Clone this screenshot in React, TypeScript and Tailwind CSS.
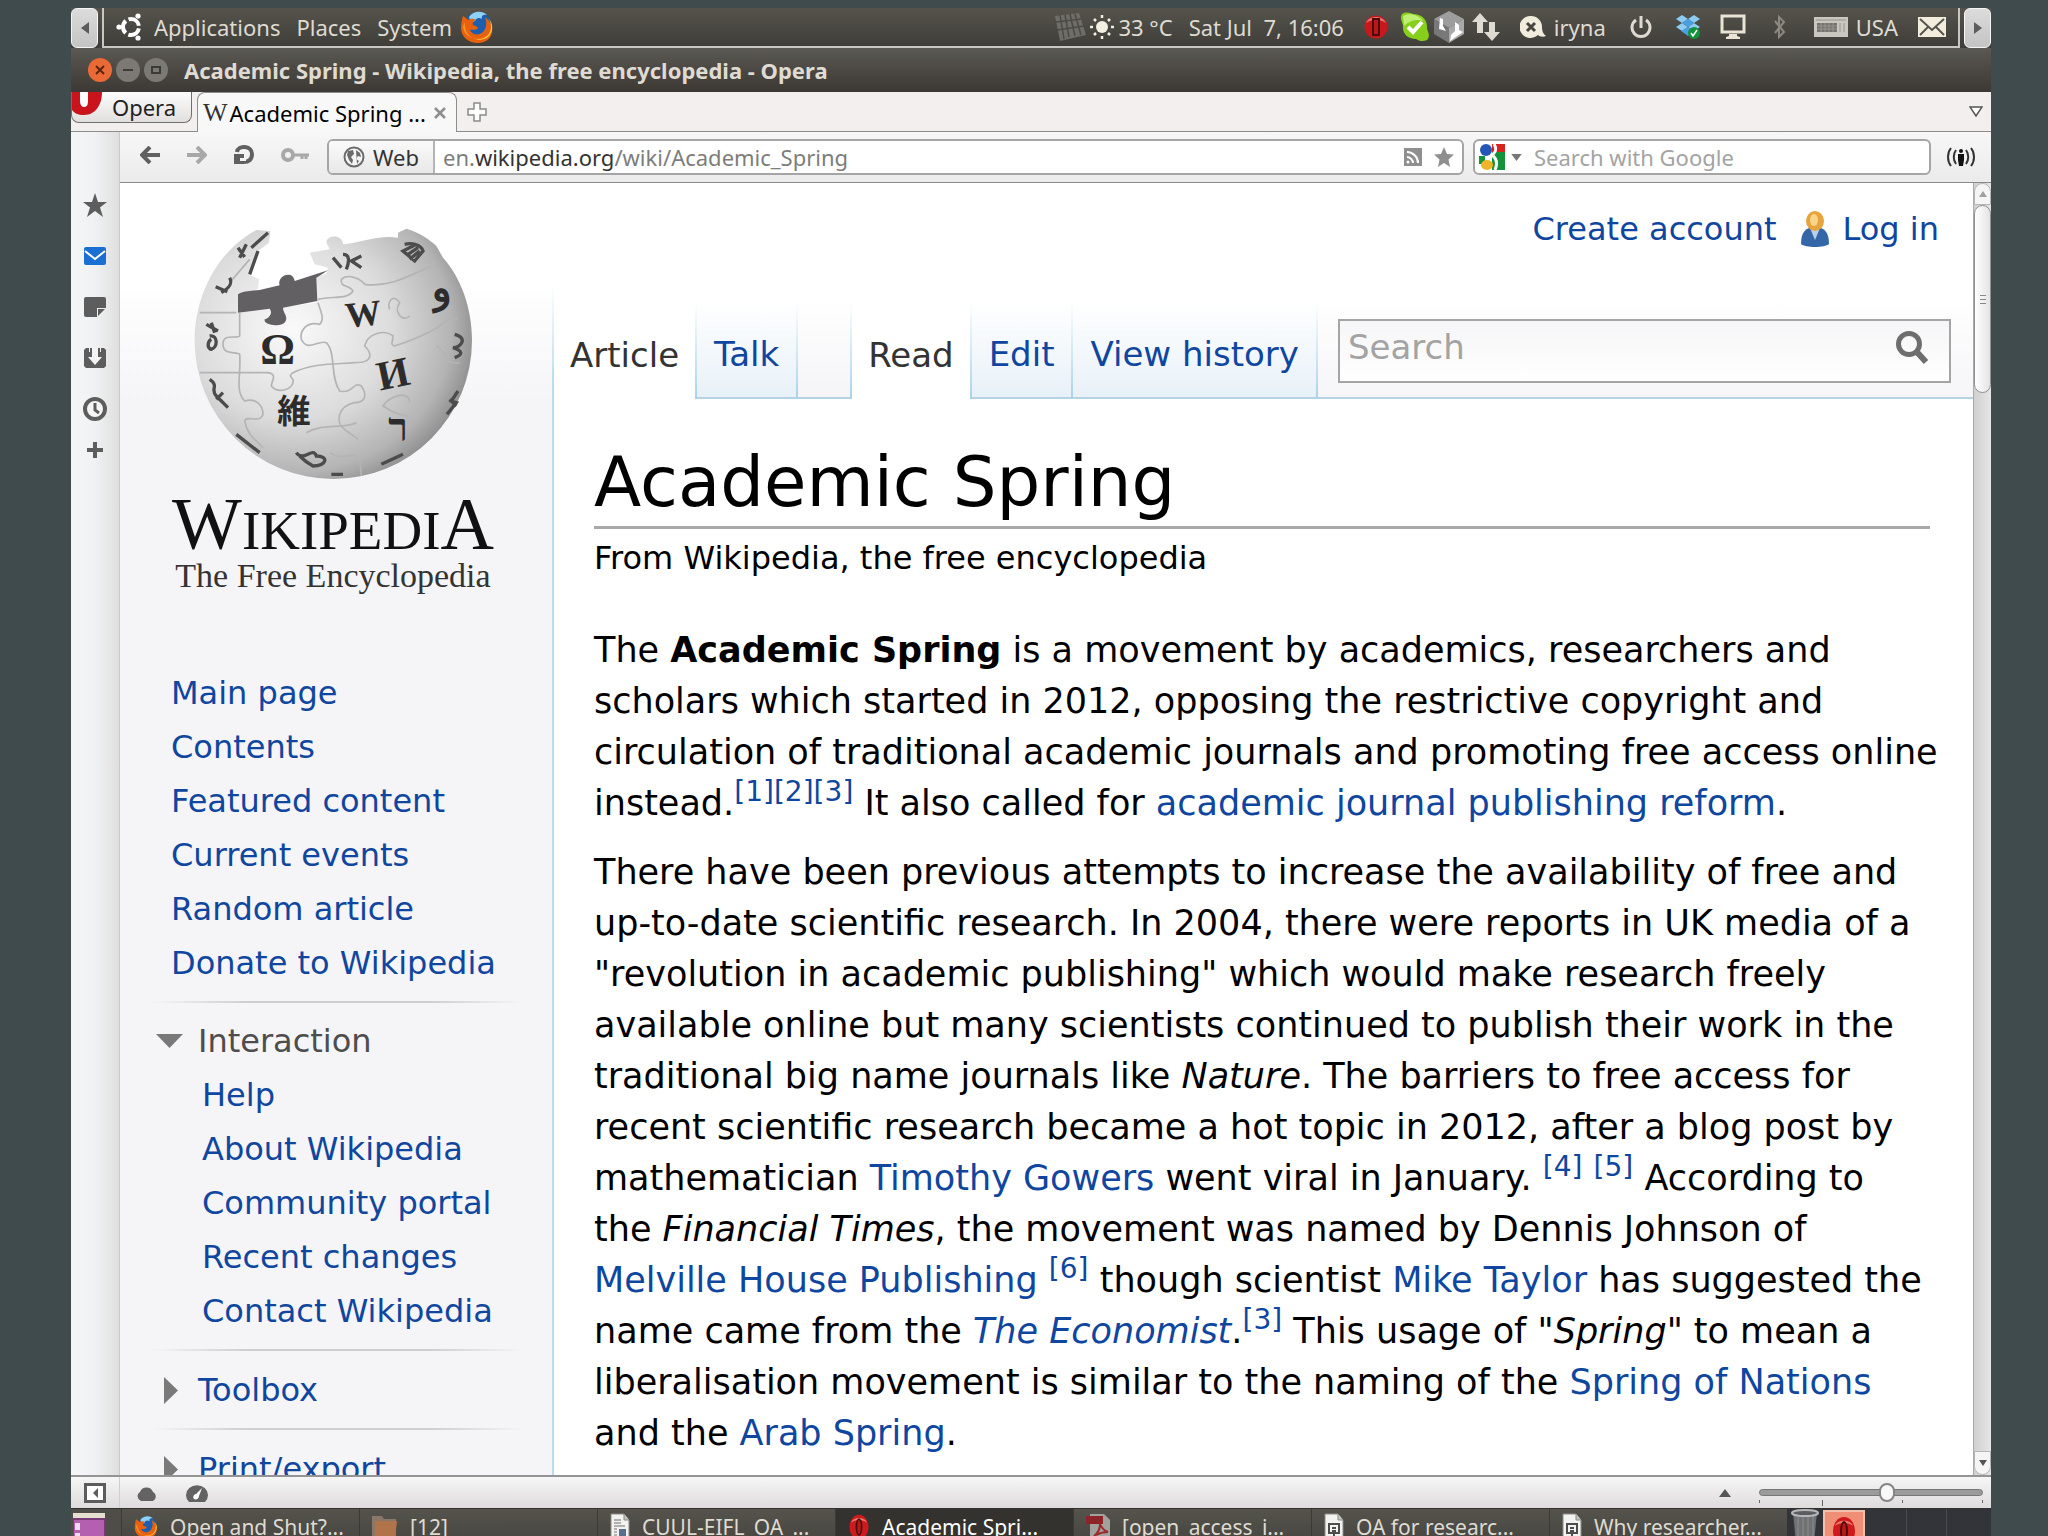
import { useState, type ReactNode } from "react";
import { clsx } from "clsx";

const mainLinks = ["Main page", "Contents", "Featured content", "Current events", "Random article", "Donate to Wikipedia"];
const interactionLinks = ["Help", "About Wikipedia", "Community portal", "Recent changes", "Contact Wikipedia"];

function WikiLink({ children }: { children: ReactNode }) {
  return <a href="#" className="text-[#0f469f]">{children}</a>;
}

function Ref({ n }: { n: number }) {
  return <sup className="text-[28px] leading-none"><a href="#" className="text-[#0f469f]">[{n}]</a></sup>;
}

function FirefoxIcon({ className }: { className: string }) {
  return (
    <svg viewBox="0 0 34 34" className={className}>
      <circle cx="18" cy="15" r="13" fill="#1d5fae" />
      <path d="M9 7c4-6 13-7 18-2-4-1-6 1-5 4-3-2-6-1-7 2-2 2-5 0-6-4z" fill="#8fd0f5" />
      <path d="M3 6c2 1 4 3 5 4 3-2 6-1 8 0-3 1-4 3-3 5 2 1 4 1 5 3-3 3-6 1-8 2 2 5 9 6 13 2 4-4 4-11 2-15 5 4 8 9 7 15-1 7-7 11-14 11C9 33 1 27 1 18 1 13 2 9 3 6z" fill="#e8610f" />
      <path d="M28 8c4 5 4 12 0 17-4 4-10 5-15 3 8 4 17 1 19-8 1-5-1-9-4-12z" fill="#fdc63c" />
      <path d="M5 12c-1 7 2 13 8 16-5-1-10-6-10-12z" fill="#f6932a" />
    </svg>
  );
}

function OperaIcon({ className }: { className: string }) {
  return (
    <svg viewBox="0 0 24 30" className={className}>
      <ellipse cx="12" cy="15" rx="11" ry="14" fill="#cf1a1d" />
      <path d="M3 10C5 3 19 3 21 10c-4-4-14-4-18 0z" fill="#ee7a70" />
      <ellipse cx="12" cy="15" rx="4" ry="10" fill="#4a0c0c" />
      <ellipse cx="12" cy="15" rx="2" ry="8" fill="#b81a1a" />
    </svg>
  );
}

function DocIcon({ chart }: { chart?: boolean }) {
  return (
    <svg viewBox="0 0 20 28" className="h-7 w-5 shrink-0">
      <path d="M1 1h13l5 6v20H1z" fill="#f2f2f0" stroke="#8b8b86" />
      <path d="M14 1v6h5" fill="#c4c4c0" stroke="#8b8b86" />
      {chart ? (
        <path d="M4 11h12M5 12v8h10v-8M8 15h4M8 18h4M10 20v4M6 25h8" stroke="#4d4d4d" strokeWidth="2" fill="none" />
      ) : (
        <>
          <path d="M4 7h7M4 10h7M4 13h11M4 16h3M4 19h3M4 22h3" stroke="#9a9a9a" strokeWidth="1.5" />
          <path d="M9 16h7v8H9z" fill="#587090" />
        </>
      )}
    </svg>
  );
}

function TopPanel() {
  return (
    <header className="flex h-10 shrink-0 items-stretch bg-linear-to-b from-[#55534b] to-[#3e3d39] text-[22px] leading-7 text-[#dfdbd2]">
      <button type="button" aria-label="Hide panel left" className="flex w-[27px] items-center justify-center rounded-md border border-[#f5f5f5] bg-linear-to-b from-[#dcdcdc] to-[#c4c4c4]">
        <svg viewBox="0 0 8 12" className="h-3 w-2"><path d="M8 0v12L0 6z" fill="#5c5c5c" /></svg>
      </button>
      <div className="ml-1 flex min-w-0 flex-1 items-center border-x-2 border-b-2 border-[#c9c7c1] pb-px">
        <svg viewBox="0 0 28 28" className="ml-3 size-7 shrink-0">
          <circle cx="15" cy="14" r="8" fill="none" stroke="#fff" strokeWidth="4" strokeDasharray="13.7 3" strokeDashoffset="-1.5" />
          <circle cx="3" cy="14" r="2.6" fill="#fff" />
          <circle cx="22" cy="3" r="2.6" fill="#fff" />
          <circle cx="22" cy="25" r="2.6" fill="#fff" />
        </svg>
        <nav className="ml-[10px] flex items-center gap-4">
          <button type="button">Applications</button>
          <button type="button">Places</button>
          <button type="button">System</button>
        </nav>
        <FirefoxIcon className="ml-2 size-[34px] shrink-0" />
        <div className="ml-auto flex items-center pr-3">
          <svg viewBox="0 0 32 28" className="h-7 w-8">
            <path d="M1 3l24-3 7 22-26 6z" fill="#6f6d68" />
            <path d="M6 2l4 24M11 2l4 22M16 1l5 22M21 1l6 21M2 9l25-3M3 17l27-4" stroke="#4b4a45" strokeWidth="1.5" />
          </svg>
          <svg viewBox="0 0 24 24" className="ml-1 size-6">
            <circle cx="12" cy="12" r="6" fill="#f3efe2" />
            <path d="M12 0v3M12 21v3M0 12h3M21 12h3M4 4l2 2M18 18l2 2M20 4l-2 2M4 20l2-2" stroke="#f3efe2" strokeWidth="2.5" />
          </svg>
          <span className="ml-1">33 °C</span>
          <span className="ml-4 whitespace-pre">Sat Jul  7, 16:06</span>
          <svg viewBox="0 0 24 24" className="ml-5 size-6">
            <circle cx="12" cy="12" r="11.5" fill="#c8181b" />
            <path d="M2 8C5 0 19 0 22 8c-5-4-15-4-20 0z" fill="#ea7168" />
            <path d="M9 4h6v16H9z" fill="#b81a1a" stroke="#4a0c0c" strokeWidth="2" />
          </svg>
          <svg viewBox="0 0 30 30" className="ml-3 h-[30px] w-[30px]">
            <path d="M2 2c4-3 9-1 11 0 9 0 15 6 14 15 3 6 2 9 0 11-4 2-8 1-11-1C7 27 2 21 3 13 1 8 0 5 2 2z" fill="#86cf1b" />
            <path d="M3 4c6-4 16-1 20 5-6-2-13-1-19 5z" fill="#c1ee74" />
            <path d="M8 15l5 5 9-10" stroke="#fff" strokeWidth="4" fill="none" />
          </svg>
          <svg viewBox="0 0 30 32" className="ml-1 h-8 w-[30px]">
            <path d="M15 0l15 8-15 9L0 8z" fill="#9e9e9e" />
            <path d="M0 8l15 9v15L0 23z" fill="#787878" />
            <path d="M30 8l-15 9v15l15-9z" fill="#a9a9a9" />
            <path d="M6 7l3 1v7l3 5-7-2zM21 11l4 3v5l4 2-13 9 1-6 4-4z" fill="#fff" />
          </svg>
          <svg viewBox="0 0 28 28" className="ml-2 size-7">
            <path d="M8 0l8 9h-5v11H5V9H0zM17 9h6v10h5l-8 9-8-9h5z" fill="#dfdbd2" />
          </svg>
          <svg viewBox="0 0 26 24" className="ml-5 h-6 w-[26px]">
            <path d="M11 1a11 11 0 0 1 11 11c0 4 1 7 4 9-3 1-6 1-8-1A11 11 0 1 1 11 1z" fill="#f1ecdc" />
            <path d="M7 8l8 8M15 8l-8 8" stroke="#47453f" strokeWidth="3" />
          </svg>
          <span className="ml-2">iryna</span>
          <svg viewBox="0 0 22 24" className="ml-6 h-6 w-[22px]">
            <path d="M6 5a9 9 0 1 0 10 0M11 1v12" stroke="#dfdbd2" strokeWidth="3" fill="none" />
          </svg>
          <svg viewBox="0 0 24 26" className="ml-6 h-[26px] w-6">
            <path d="M6 1l6 4-6 4-6-4zM18 1l6 4-6 4-6-4zM6 9l6 4-6 4-6-4zM18 9l6 4-6 4-6-4z" fill="#8ccbf3" />
            <path d="M5 17l7-4 7 4-7 5zM6 9l6-4 6 4-6 4z" fill="#4a9fe0" />
            <circle cx="18" cy="19" r="6" fill="#12923a" />
            <path d="M15 19l2 3 4-6" stroke="#fff" strokeWidth="1.5" fill="none" />
          </svg>
          <svg viewBox="0 0 26 26" className="ml-5 size-[26px]">
            <path d="M2 2h22v16H2z" fill="none" stroke="#e9e4d6" strokeWidth="3" />
            <path d="M9 20h8v2l3 1v2H6v-2l3-1z" fill="#e9e4d6" />
          </svg>
          <svg viewBox="0 0 12 24" className="ml-7 h-6 w-3">
            <path d="M1 6l9 11-5 5V2l5 5L1 18" fill="none" stroke="#8c8983" strokeWidth="2" />
          </svg>
          <svg viewBox="0 0 34 20" className="ml-7 h-5 w-[34px]">
            <path d="M0 0h34v20H0z" fill="#c9c7c0" />
            <path d="M3 6h20v9H3z" fill="#75736d" />
            <path d="M3 9h20M3 12h20M7 6v9M11 6v9M15 6v9M19 6v9M2 3h30M26 6v9M30 6v9" stroke="#96948d" strokeWidth="1" />
          </svg>
          <span className="ml-2">USA</span>
          <svg viewBox="0 0 28 20" className="ml-5 h-5 w-7">
            <path d="M0 0h28v20H0z" fill="#f1ecdc" />
            <path d="M2 2l12 11L26 2M2 18l8-8M26 18l-8-8" stroke="#55534c" strokeWidth="2" fill="none" />
          </svg>
        </div>
      </div>
      <button type="button" aria-label="Hide panel right" className="ml-1 flex w-[27px] items-center justify-center rounded-md border border-[#f5f5f5] bg-linear-to-b from-[#dcdcdc] to-[#c4c4c4]">
        <svg viewBox="0 0 8 12" className="h-3 w-2"><path d="M0 0v12l8-6z" fill="#5c5c5c" /></svg>
      </button>
    </header>
  );
}

function TitleBar() {
  return (
    <div className="flex h-11 shrink-0 items-center gap-1 bg-linear-to-b from-[#5b5953] to-[#3c3834] pb-px pl-[17px]">
      <button type="button" aria-label="Close" className="flex size-6 items-center justify-center rounded-full bg-[#e96a35]">
        <svg viewBox="0 0 10 10" className="size-[10px]"><path d="M1 1l8 8M9 1l-8 8" stroke="#5b2413" strokeWidth="2" /></svg>
      </button>
      <button type="button" aria-label="Minimize" className="flex size-6 items-center justify-center rounded-full bg-[#7b7973]">
        <svg viewBox="0 0 10 10" className="size-[10px]"><path d="M0 5h10" stroke="#3c3a36" strokeWidth="2" /></svg>
      </button>
      <button type="button" aria-label="Maximize" className="flex size-6 items-center justify-center rounded-full bg-[#7b7973]">
        <svg viewBox="0 0 10 10" className="size-[10px]"><path d="M1 2h8v6H1z" fill="none" stroke="#3c3a36" strokeWidth="2" /></svg>
      </button>
      <h1 className="ml-3 text-[22px] leading-7 font-bold text-[#dfdbd2]">Academic Spring - Wikipedia, the free encyclopedia - Opera</h1>
    </div>
  );
}

function TabBar() {
  return (
    <div className="flex h-10 shrink-0 items-start border-b border-[#8d8d8d] bg-[#f2efee] text-[22px] text-[#222]">
      <button type="button" className="mr-[5px] flex h-[31px] w-[121px] items-start gap-[10px] overflow-hidden rounded-b-lg border border-t-0 border-[#707070] bg-linear-to-b from-[#fcfcfc] to-[#e2e0df]">
        <svg viewBox="0 0 30 23" className="h-[23px] w-[30px] shrink-0">
          <path d="M0 0h30c0 12-6 23-18 23C6 23 2 21 0 18z" fill="#c9141c" />
          <path d="M8 0h8v8c0 5-1 7-4 7S8 12 8 8z" fill="#fff" />
        </svg>
        <span className="leading-[30px]">Opera</span>
      </button>
      <div className="flex h-10 w-[260px] items-center gap-[2px] rounded-t-lg border border-b-0 border-[#8d8d8d] bg-[#f9f8f8] pl-[5px]">
        <span className="text-[26px] leading-8 text-[#333] [font-family:'Liberation_Serif',serif]">W</span>
        <span className="flex-1 leading-8 whitespace-nowrap text-black">Academic Spring ...</span>
        <button type="button" aria-label="Close tab" className="mr-[10px]">
          <svg viewBox="0 0 12 12" className="size-3"><path d="M1 1l10 10M11 1L1 11" stroke="#8e8e8e" strokeWidth="2.5" /></svg>
        </button>
      </div>
      <button type="button" aria-label="New tab" className="mt-[10px] ml-[10px]">
        <svg viewBox="0 0 20 20" className="size-5"><path d="M7 1h6v6h6v6h-6v6H7v-6H1V7h6z" fill="#fff" stroke="#8b8b8b" strokeWidth="1.5" /></svg>
      </button>
      <button type="button" aria-label="Closed tabs" className="mt-[14px] mr-2 ml-auto">
        <svg viewBox="0 0 14 11" className="h-[11px] w-[14px]"><path d="M1 1h12L7 10z" fill="#fff" stroke="#555" strokeWidth="1.5" /></svg>
      </button>
    </div>
  );
}

function AddressBar() {
  return (
    <div className="flex h-[51px] shrink-0 items-center border-b border-[#8a8a8a] bg-linear-to-b from-[#f8f7f7] to-[#ecebeb] pr-4 pl-5 text-[22px] leading-7">
      <div className="mb-1 flex w-[187px] items-center justify-between pr-[18px]">
        <button type="button" aria-label="Back">
          <svg viewBox="0 0 20 18" className="h-[18px] w-5"><path d="M20 9H4M10 1L2 9l8 8" fill="none" stroke="#606060" strokeWidth="4" /></svg>
        </button>
        <button type="button" aria-label="Forward">
          <svg viewBox="0 0 20 18" className="h-[18px] w-5"><path d="M0 9h16M10 1l8 8-8 8" fill="none" stroke="#a8a8a8" strokeWidth="4" /></svg>
        </button>
        <button type="button" aria-label="Reload">
          <svg viewBox="0 0 20 20" className="size-5"><path d="M3 7c1-7 15-7 15 2 0 6-4 8-9 8" fill="none" stroke="#606060" strokeWidth="4" /><path d="M0 19V9h10v10z" fill="#606060" /><path d="M6 13h6v3H6z" fill="#f3f2f2" /></svg>
        </button>
        <button type="button" aria-label="Wand">
          <svg viewBox="0 0 28 14" className="h-[14px] w-7"><circle cx="7" cy="7" r="5" fill="none" stroke="#a8a8a8" strokeWidth="4" /><path d="M12 7h16M21 7v4M25 7v4" stroke="#a8a8a8" strokeWidth="3" /></svg>
        </button>
      </div>
      <div className="flex h-9 min-w-0 flex-1 items-stretch overflow-hidden rounded-md border-2 border-[#a5a5a5] bg-white">
        <button type="button" className="flex w-[106px] shrink-0 items-center gap-2 border-r-2 border-[#b5b5b5] bg-linear-to-b from-[#fafafa] to-[#e8e8e8] pl-[14px] text-[#333]">
          <svg viewBox="0 0 22 22" className="size-[22px]">
            <circle cx="11" cy="11" r="9.5" fill="#f4f4f4" stroke="#6b6b6b" strokeWidth="2" />
            <path d="M5 5l5-1 1 4-3 3 2 3-1 4-3-4-2-5zM13 4l4 3 1 4-3-1-2 3 3 2-2 3" fill="#6b6b6b" />
          </svg>
          Web
        </button>
        <div className="flex min-w-0 flex-1 items-center pl-2 text-[#7d7d7d]">
          <span>en.</span><span className="text-[#333]">wikipedia.org</span><span>/wiki/Academic_Spring</span>
        </div>
        <div className="flex items-center gap-3 pr-2">
          <svg viewBox="0 0 18 18" className="size-[18px]"><path d="M0 0h18v18H0z" fill="#8f8f8f" /><path d="M3 4c6 0 11 5 11 11M3 9c3 0 6 3 6 6" fill="none" stroke="#fff" strokeWidth="2" /><circle cx="4" cy="14" r="1.5" fill="#fff" /></svg>
          <svg viewBox="0 0 20 20" className="size-5"><path d="M10 0l3 7 7 .5-5.500 5L16 20l-6-4-6 4 1.500-7.500L0 7.500 7 7z" fill="#8f8f8f" /></svg>
        </div>
      </div>
      <div className="ml-[9px] flex h-9 w-[458px] items-center rounded-md border-2 border-[#a5a5a5] bg-white pl-1">
        <svg viewBox="0 0 26 26" className="size-[26px] shrink-0">
          <path d="M0 0h14v26H0z" fill="#fff" />
          <path d="M13 0h13v8H13z" fill="#d8231f" />
          <path d="M13 8h13v18H13z" fill="#12923a" />
          <path d="M0 12h6v8H0z" fill="#12923a" />
          <ellipse cx="7" cy="6" rx="6" ry="6" fill="#2456b8" />
          <ellipse cx="8" cy="21" rx="6" ry="5" fill="#eeb42a" />
          <path d="M15 0c3 5 2 8-2 11 4 3 6 8 3 15" fill="none" stroke="#fff" strokeWidth="3" />
        </svg>
        <svg viewBox="0 0 12 8" className="ml-[6px] h-[7px] w-[11px] shrink-0"><path d="M0 0h12L6 8z" fill="#777" /></svg>
        <input aria-label="Search with Google" placeholder="Search with Google" className="ml-3 min-w-0 flex-1 bg-transparent outline-none placeholder:text-[#a3a3a3]" />
      </div>
      <button type="button" aria-label="Opera Turbo" className="ml-4">
        <svg viewBox="0 0 28 20" className="h-5 w-7">
          <path d="M9 3c-3 4-3 10 0 14M19 3c3 4 3 10 0 14M4 1c-4 5-4 13 0 18M24 1c4 5 4 13 0 18" fill="none" stroke="#333" strokeWidth="2" />
          <circle cx="14" cy="4" r="2" fill="#111" />
          <path d="M11 7h6v6l-1 6h-4l-1-6z" fill="#111" />
        </svg>
      </button>
    </div>
  );
}

function OperaPanels() {
  return (
    <aside className="flex w-[49px] shrink-0 flex-col items-center border-r border-[#c9c9c9] bg-linear-to-r from-[#f4f6f9] via-[#f0f1f2] to-[#dfdfdf] pt-[47px]">
      <button type="button" aria-label="Bookmarks" className="h-[51px]">
        <svg viewBox="0 0 24 24" className="size-6"><path d="M12 0l3 9h9l-7 5.500 3 9.500-8-6-8 6 3-9.500L0 9h9z" fill="#5d5d5d" /></svg>
      </button>
      <button type="button" aria-label="Mail" className="h-[51px]">
        <svg viewBox="0 0 22 18" className="h-[18px] w-[22px]"><rect width="22" height="18" rx="2" fill="#1c6fd2" /><path d="M1 4l10 8 10-8" stroke="#fff" strokeWidth="2" fill="none" /></svg>
      </button>
      <button type="button" aria-label="Notes" className="h-[51px]">
        <svg viewBox="0 0 22 20" className="h-5 w-[22px]"><path d="M2 0h18a2 2 0 0 1 2 2v9h-9v9H2a2 2 0 0 1-2-2V2a2 2 0 0 1 2-2z" fill="#5d5d5d" /><path d="M14 19v-7h7z" fill="#5d5d5d" /></svg>
      </button>
      <button type="button" aria-label="Downloads" className="h-[51px]">
        <svg viewBox="0 0 22 20" className="h-5 w-[22px]"><path d="M2 0h18l2 2v16l-2 2H2l-2-2V2z" fill="#5d5d5d" /><path d="M5 0h1v4H5zM16 0h1v4h-1zM8 0h6v9h4l-7 8-7-8h4z" fill="#f2f3f4" /></svg>
      </button>
      <button type="button" aria-label="History" className="h-[51px]">
        <svg viewBox="0 0 24 24" className="size-6"><circle cx="12" cy="12" r="10" fill="#f5f5f5" stroke="#5d5d5d" strokeWidth="4" /><path d="M12 6v7l4 3" stroke="#5d5d5d" strokeWidth="3" fill="none" /></svg>
      </button>
      <button type="button" aria-label="Add panel" className="mt-2">
        <svg viewBox="0 0 16 16" className="size-4"><path d="M8 0v16M0 8h16" stroke="#5d5d5d" strokeWidth="4" /></svg>
      </button>
    </aside>
  );
}

function WikipediaLogo() {
  return (
    <a href="#" aria-label="Wikipedia, the Free Encyclopedia" className="flex h-[483px] flex-col items-center pt-[43px] pr-[6px] text-[#111] [font-family:'Liberation_Serif','Noto_Sans_CJK_JP',serif]">
      <svg viewBox="400 140 840 765" className="h-[255px] w-[280px]">
        <defs>
          <radialGradient id="globe" cx="0.35" cy="0.4" r="0.72">
            <stop offset="0" stopColor="#fafafa" />
            <stop offset="0.5" stopColor="#dcdcdc" />
            <stop offset="0.8" stopColor="#b4b4b4" />
            <stop offset="1" stopColor="#7c7c7c" />
          </radialGradient>
        </defs>
        <path d="M590 152C480 210 405 340 405 483a416 416 0 0 0 832 0c0-103-37-193-87-248l-20-35c-20-20-50-40-90-52l-25 12v15c-55-10-115 15-165 20 0-30-50-30-50-5l10 20-60 10 15 35 40 10-5 20-30 5v80l-230 30v-55l55-15 3-30-30-15 27-70 33-25 4-35z" fill="url(#globe)" />
        <path d="M535 345Q545 335 600 332l60-14c-10-28 40-48 45-13l100-32-35 22 3 70-103 20c0 15 15 25 8 40-8 20-68 15-63-5 15-5 25-20 15-32l-95 12z" fill="#626062" />
        <g fill="none" stroke="#b4b4b4" strokeWidth="5">
          <path d="M540 400v70c-10 10-50-10-50 25s40 20 50 30c5 60-15 110 15 140 30-10 55 10 55 40-10 30-50 0-55 20 10 50 40 60 55 80" />
          <path d="M420 580h205c30 5 10 25 10 40 20 25 60 10 65-10 5-20-20-15 0-30 60-30 130-25 185-30 60 0 50-30 30-50 10-40 60-50 85-30 0 20-10 25 5 30 60-20 130-50 160-80 10-10 20 10 30-5" />
          <path d="M775 370c10 30 20 50 5 65-40-10-60 20-55 45 20 40 50 0 75 10 30 30 10 100 40 145 40 10 40-30 65-15 20 30 10 50-20 50-50 10-60 60-30 80 10 10 30 20 40 30" />
          <path d="M775 360c50-10 90 0 105-25-10-20-40-10-35-35 20-20 60 0 70 15 80 10 140-30 200-55" />
          <path d="M1050 410c-20 20-50-10-30-40-20-30-40 0-30 20M1050 670c0-40-60-20-80 10 30 20 60 30 80 30M810 820c40 30 70-10 90 20l5 50M740 760c50-30 110-10 150-30M570 240l-60 70M420 400h110M1130 500c30 10 20 60 70 50" />
        </g>
        <g fill="none" stroke="#4c4c4c" strokeWidth="10">
          <path d="M535 205l20 28M560 195l-20 40M625 160l-50 45M595 215l-25 70M468 322l35 15M510 295c5 10 10 25-25 45M440 435l35 20M450 470c25-5 25 35 5 40-15-5-10-25 0-30M455 430l10 30M450 600c30 20 0 30 20 50l35 35M490 640l-20 20M530 765l70 55M710 820c20 30 50-20 60 10 40 0 30 30-10 30-20-10-30-20-40-30M815 885h35M965 855l65-30M1195 635l-20 30 15 5-28 35M1170 660l20 20M1185 465c40 10 20 40-5 40 30 10 30 20 5 30M820 235l25 30M850 225c20 0 20 20 10 45M905 230l-30 15 30 20" />
          <path d="M1035 195c20-5 50 0 55 20l-25 30-35-30 40-20M1045 225l30-20M1050 240l30-25" />
        </g>
        <g fill="#2c2c2c" textAnchor="middle">
          <text x="654" y="554" fontSize="130" fontWeight="bold">Ω</text>
          <text x="910" y="440" fontSize="108" fontWeight="bold" transform="rotate(-6 910 400)">W</text>
          <text x="1000" y="625" fontSize="125" fontWeight="bold" transform="rotate(-12 1000 585)">И</text>
          <text x="703" y="730" fontSize="100" fontWeight="bold">維</text>
          <text x="1015" y="785" fontSize="120" fontWeight="bold">ר</text>
          <text x="1145" y="365" fontSize="120" fontWeight="bold" transform="rotate(-10 1145 345)">و</text>
        </g>
      </svg>
      <span className="mt-2 text-[55px] leading-[70px]"><span className="text-[74px]">W</span>IKIPEDI<span className="text-[74px]">A</span></span>
      <span className="text-[34px] leading-5 text-[#333]">The Free Encyclopedia</span>
    </a>
  );
}

function Divider() {
  return (
    <div className="mr-7 ml-8 flex h-6 items-center">
      <div className="h-[2px] w-full bg-[linear-gradient(to_right,transparent,#cfcfcf_25%,#cfcfcf_75%,transparent)]" />
    </div>
  );
}

function WikiSidebar() {
  return (
    <aside className="w-[432px] shrink-0 overflow-hidden bg-linear-to-b from-white from-[100px] to-[#f5f4f7] to-[220px] text-[32px] leading-[54px] text-[#0f469f]">
      <WikipediaLogo />
      <ul className="pl-[51px] whitespace-nowrap">
        {mainLinks.map((link) => <li key={link}><a href="#">{link}</a></li>)}
      </ul>
      <Divider />
      <button type="button" className="flex w-full items-center gap-[15px] pl-9 text-[#4d4d4d]">
        <svg viewBox="0 0 27 14" className="h-[14px] w-[27px]"><path d="M0 0h27L13.500 14z" fill="#797979" /></svg>
        Interaction
      </button>
      <ul className="pl-[82px] whitespace-nowrap">
        {interactionLinks.map((link) => <li key={link}><a href="#">{link}</a></li>)}
      </ul>
      {["Toolbox", "Print/export"].map((label) => (
        <div key={label}>
          <Divider />
          <button type="button" className="flex w-full items-center gap-5 pt-px pl-11">
            <svg viewBox="0 0 14 27" className="h-[27px] w-[14px]"><path d="M0 0v27l14-13.500z" fill="#797979" /></svg>
            {label}
          </button>
        </div>
      ))}
    </aside>
  );
}

function WikiTab({ label, active }: { label: string; active?: boolean }) {
  return (
    <a
      href="#"
      className={clsx(
        "flex h-[99px] items-center pt-[10px] whitespace-nowrap",
        active ? "bg-white px-4 text-[#333]" : "border-b-2 border-[#b5d3e3] bg-linear-to-b from-white to-[#e8f1f8] px-[17px] text-[#0f469f]",
      )}
    >
      {label}
    </a>
  );
}

function Fade() {
  return <div className="h-[99px] w-[2px] shrink-0 bg-linear-to-b from-white to-[#a7d3ec]" />;
}

function Article() {
  return (
    <div className="min-w-0 flex-1 overflow-hidden bg-white">
      <div className="flex h-[216px] flex-col justify-between text-[34px] leading-10">
        <div className="flex items-center justify-end gap-6 pt-[26px] pr-[34px] text-[32px]">
          <WikiLink>Create account</WikiLink>
          <span className="flex items-center gap-[14px]">
            <svg viewBox="0 0 28 36" className="h-9 w-7">
              <path d="M0 33c0-12 5-17 14-17s14 5 14 17c-4 4-24 4-28 0z" fill="#3567a8" />
              <path d="M9 17l5 12 5-12z" fill="#b9d0ea" />
              <ellipse cx="14" cy="10" rx="9" ry="10" fill="#e7a43c" />
              <ellipse cx="13" cy="9" rx="4" ry="6" fill="#f8d58b" />
            </svg>
            <WikiLink>Log in</WikiLink>
          </span>
        </div>
        <div className="flex items-end">
          <WikiTab label="Article" active />
          <Fade />
          <WikiTab label="Talk" />
          <Fade />
          <div className="h-[99px] w-[52px] border-b-2 border-[#b5d3e3] bg-linear-to-b from-white to-[#f5f4f7]" />
          <Fade />
          <WikiTab label="Read" active />
          <Fade />
          <WikiTab label="Edit" />
          <Fade />
          <WikiTab label="View history" />
          <Fade />
          <div className="flex h-[99px] min-w-0 flex-1 items-end border-b-2 border-[#b5d3e3] bg-linear-to-b from-white to-[#f6f5f8] pr-[22px] pb-[14px] pl-5">
            <div className="flex h-16 w-full items-center border-2 border-[#a5a5a5] bg-linear-to-b from-[#f6f5f7] to-white pr-5 pl-2">
              <input aria-label="Search Wikipedia" placeholder="Search" className="min-w-0 flex-1 bg-transparent pb-2 outline-none placeholder:text-[#a3a3a3]" />
              <button type="button" aria-label="Search" className="pb-2">
                <svg viewBox="0 0 34 34" className="size-[34px]"><circle cx="14" cy="14" r="10.5" fill="none" stroke="#6e6e6e" strokeWidth="5" /><path d="M21 21l10 11" stroke="#6e6e6e" strokeWidth="6" /></svg>
              </button>
            </div>
          </div>
        </div>
      </div>
      <main className="pt-[43px] pr-8 pl-10 text-[35px] leading-[51px] text-black">
        <h2 className="mr-[11px] border-b-[3px] border-[#a8a8a8] pb-1 text-[69px] leading-[80px]">Academic Spring</h2>
        <div className="mt-[9px] text-[32px] leading-10">From Wikipedia, the free encyclopedia</div>
        <p className="mt-[47px]">
          The <b>Academic Spring</b> is a movement by academics, researchers and scholars which started in 2012, opposing
          the restrictive copyright and circulation of traditional academic journals and promoting free access online
          instead.<Ref n={1} /><Ref n={2} /><Ref n={3} /> It also called for <WikiLink>academic journal publishing reform</WikiLink>.
        </p>
        <p className="mt-[18px]">
          There have been previous attempts to increase the availability of free
          and <span className="whitespace-nowrap">up-to-date</span> scientific research. In
          2004, there were reports in UK media of a "revolution in academic publishing" which would make research freely
          available online but many scientists continued to publish their work in the traditional big name journals
          like <i>Nature</i>. The barriers to free access for recent scientific research became a hot topic in 2012, after a blog
          post by mathematician <WikiLink>Timothy Gowers</WikiLink> went viral in January. <Ref n={4} /> <Ref n={5} /> According
          to <span className="whitespace-nowrap">the <i>Financial</i></span> <i>Times</i>, the movement was named by Dennis
          Johnson of <WikiLink>Melville House Publishing</WikiLink>{" "}
          <Ref n={6} /> though scientist <WikiLink>Mike Taylor</WikiLink> has suggested the name came from
          the <i><WikiLink>The Economist</WikiLink></i>.<Ref n={3} /> This usage of "<i>Spring</i>" to mean a liberalisation
          movement is similar to the naming of the <WikiLink>Spring of Nations</WikiLink> and the <WikiLink>Arab Spring</WikiLink>.
        </p>
      </main>
    </div>
  );
}

function ScrollBar() {
  return (
    <div className="flex w-[18px] shrink-0 flex-col items-center border-l border-[#aaa] bg-linear-to-r from-[#d0d0d0] to-[#e6e6e6]">
      <button type="button" aria-label="Scroll up" className="flex h-[22px] w-full items-center justify-center rounded-t-full border border-[#b5b5b5] bg-[#f5f5f5]">
        <svg viewBox="0 0 8 6" className="h-[6px] w-2"><path d="M4 0l4 6H0z" fill="#a0a0a0" /></svg>
      </button>
      <div className="flex h-[188px] w-full flex-col items-center justify-center gap-[3px] rounded-full border border-[#909090] bg-linear-to-r from-white to-[#e4e4e4]">
        <span className="h-px w-[6px] bg-[#888]" />
        <span className="h-px w-[6px] bg-[#888]" />
        <span className="h-px w-[6px] bg-[#888]" />
      </div>
      <button type="button" aria-label="Scroll down" className="mt-auto flex h-6 w-full items-center justify-center rounded-b-full border border-[#b5b5b5] bg-[#f5f5f5]">
        <svg viewBox="0 0 8 6" className="h-[6px] w-2"><path d="M0 0h8L4 6z" fill="#555" /></svg>
      </button>
    </div>
  );
}

function StatusBar() {
  const [zoom, setZoom] = useState(58);
  return (
    <div className="flex h-[33px] shrink-0 items-center border-t-2 border-[#949494] bg-linear-to-b from-[#f7f6f6] to-[#dedcdc]">
      <div className="flex h-full w-[49px] items-center justify-center border-r border-[#cfcfcf]">
        <svg viewBox="0 0 22 20" className="h-5 w-[22px]"><path d="M1.500 1.500h19v17h-19z" fill="#fff" stroke="#5c5c5c" strokeWidth="3" /><path d="M14 5v10l-5-5z" fill="#5c5c5c" /></svg>
      </div>
      <svg viewBox="0 0 22 16" className="ml-4 h-4 w-[22px]"><path d="M5 16a5 5 0 0 1-1-9 7 7 0 0 1 13 0 5 5 0 0 1 0 9z" fill="#636363" /></svg>
      <svg viewBox="0 0 22 18" className="ml-7 h-[18px] w-[22px]"><path d="M3 18a11 10 0 1 1 16 0z" fill="#636363" /><path d="M8 15a3 3 0 0 1 2-5l6-6-3 8c0 3-3 4-5 3z" fill="#fff" /></svg>
      <svg viewBox="0 0 12 8" className="mr-7 ml-auto h-2 w-3"><path d="M6 0l6 8H0z" fill="#555" /></svg>
      <div className="mr-2 flex w-[224px] flex-col gap-1 pt-[10px]">
        <input
          type="range"
          aria-label="Zoom"
          value={zoom}
          onChange={(event) => setZoom(Number(event.target.value))}
          className="h-[7px] w-full appearance-none rounded-full border border-[#777] bg-[#9b9b9b] [&::-webkit-slider-thumb]:h-[19px] [&::-webkit-slider-thumb]:w-4 [&::-webkit-slider-thumb]:appearance-none [&::-webkit-slider-thumb]:rounded-full [&::-webkit-slider-thumb]:border-2 [&::-webkit-slider-thumb]:border-[#858585] [&::-webkit-slider-thumb]:bg-[#f8f8f8]"
        />
        <svg viewBox="0 0 224 6" className="h-[6px] w-full"><path d="M.5 0v3M63.500 0v6M143.500 0v3M223.500 0v3" stroke="#666" /></svg>
      </div>
    </div>
  );
}

function Task({ icon, label, active }: { icon: ReactNode; label: string; active?: boolean }) {
  return (
    <button type="button" className={clsx("flex h-9 w-[238px] min-w-0 items-center gap-3 border-l border-[#3b3a36] pl-3 text-left whitespace-nowrap", active ? "bg-[#33322e] text-white" : "bg-linear-to-b from-[#55534c] to-[#45443f]")}>
      {icon}
      {label}
    </button>
  );
}

function TaskBar() {
  return (
    <footer className="flex h-7 shrink-0 items-start overflow-hidden border-t border-[#33322f] bg-[#33343a] text-[21px] leading-7 text-[#dfdbd2]">
      <div className="flex h-9 w-[50px] shrink-0 items-start bg-[#4e4d47] pt-1 pl-[2px]">
        <svg viewBox="0 0 32 34" className="h-[34px] w-8">
          <path d="M0 0h32v34H0z" fill="#b45fb0" />
          <path d="M0 0h32v6H0z" fill="#e5dfd2" />
          <path d="M2 10h5v7H2zM2 20h5v7H2z" fill="#f0dcee" />
          <path d="M0 6h32v28H0z" fill="none" stroke="#7a3a78" strokeWidth="2" />
        </svg>
      </div>
      <Task icon={<FirefoxIcon className="size-6 shrink-0" />} label="Open and Shut?..." />
      <Task
        icon={<svg viewBox="0 0 26 26" className="size-[26px] shrink-0"><path d="M0 2h10l2 3h12v21H0z" fill="#8a7768" /><path d="M3 7h22l-2 19H3z" fill="#b0734a" /></svg>}
        label="[12]"
      />
      <Task icon={<DocIcon />} label="CUUL-EIFL_OA_..." />
      <Task icon={<OperaIcon className="h-[26px] w-[22px] shrink-0" />} label="Academic Spri..." active />
      <Task
        icon={<svg viewBox="0 0 24 26" className="h-[26px] w-6 shrink-0"><path d="M4 0h14l6 6v20H4z" fill="#a3a19d" /><path d="M0 2h17v8H0z" fill="#8d2427" /><path d="M8 22c4-3 6-8 6-12 2 5 5 7 8 8-5 0-9 1-14 4z" fill="none" stroke="#9b2b2d" strokeWidth="2" /></svg>}
        label="[open_access_i..."
      />
      <Task icon={<DocIcon chart />} label="OA for researc..." />
      <Task icon={<DocIcon chart />} label="Why researcher..." />
      <svg viewBox="0 0 28 34" className="mx-1 h-[34px] w-7 shrink-0">
        <path d="M2 3h24l-3 31H5z" fill="#6f7173" />
        <path d="M7 6v28M12 6v28M17 6v28M22 6v28" stroke="#8b8d8f" />
        <ellipse cx="14" cy="4" rx="13" ry="3" fill="#5a5c5e" stroke="#b5b7b8" strokeWidth="2" />
      </svg>
      <div className="mt-px flex h-9 w-[42px] shrink-0 justify-center border-2 border-[#f3c0ae] bg-[#ee8f76] pt-1">
        <OperaIcon className="h-[30px] w-6" />
      </div>
      <div className="h-full w-[42px] border-r border-[#4a4b50]" />
      <div className="h-full w-10 border-r border-[#4a4b50]" />
    </footer>
  );
}

export default function App() {
  return (
    <div className="flex h-screen flex-col overflow-hidden bg-[#3f4b4d] pt-2 pr-[57px] pl-[71px] [font-family:'Noto_Sans',sans-serif]">
      <TopPanel />
      <TitleBar />
      <TabBar />
      <div className="flex min-h-0 flex-1">
        <OperaPanels />
        <div className="flex min-w-0 flex-1 flex-col">
          <AddressBar />
          <div className="flex min-h-0 flex-1">
            <div className="flex min-w-0 flex-1 [font-family:'DejaVu_Sans',sans-serif]">
              <WikiSidebar />
              <div className="w-[2px] shrink-0 bg-linear-to-b from-white from-[100px] to-[#b9dcee] to-[200px]" />
              <Article />
            </div>
            <ScrollBar />
          </div>
        </div>
      </div>
      <StatusBar />
      <TaskBar />
    </div>
  );
}
